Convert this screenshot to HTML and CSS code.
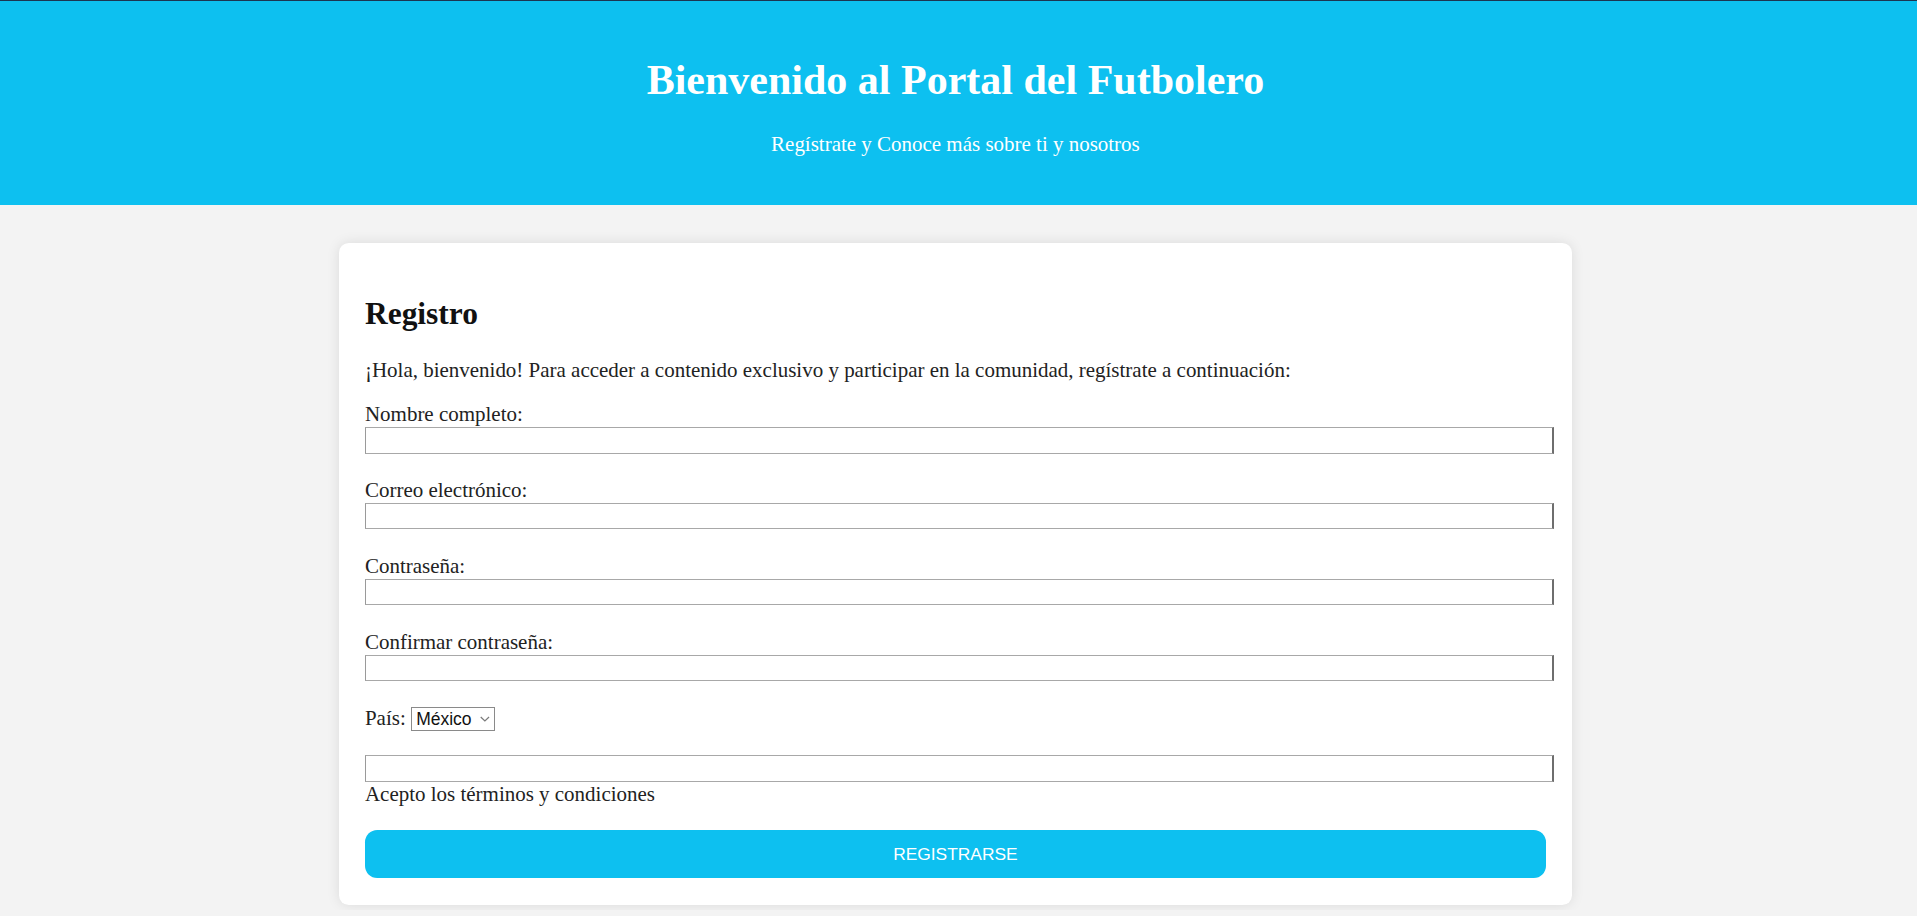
FILE: index.html
```html
<!DOCTYPE html>
<html lang="es">
<head>
<meta charset="utf-8">
<title>Portal del Futbolero</title>
<link rel="stylesheet" href="styles.css">
</head>
<body>
<header class="site-header">
  <h1 class="site-title">Bienvenido al Portal del Futbolero</h1>
  <p class="site-subtitle">Regístrate y Conoce más sobre ti y nosotros</p>
</header>
<main class="page">
  <section class="card">
    <h2 class="card-title">Registro</h2>
    <p class="intro">¡Hola, bienvenido! Para acceder a contenido exclusivo y participar en la comunidad, regístrate a continuación:</p>
    <form class="form">
      <div class="field">
        <label class="field-label" for="nombre">Nombre completo:</label>
        <input class="field-input" id="nombre" type="text">
      </div>
      <div class="field">
        <label class="field-label" for="correo">Correo electrónico:</label>
        <input class="field-input" id="correo" type="email">
      </div>
      <div class="field">
        <label class="field-label" for="pass">Contraseña:</label>
        <input class="field-input" id="pass" type="password">
      </div>
      <div class="field">
        <label class="field-label" for="pass2">Confirmar contraseña:</label>
        <input class="field-input" id="pass2" type="password">
      </div>
      <div class="field-country">
        <label for="pais">País:</label>
        <span class="select-wrap">
          <select id="pais" class="country-select"><option>México</option><option>Argentina</option><option>España</option></select>
          <svg class="select-arrow" width="8" height="5" viewBox="0 0 8 5" aria-hidden="true"><path d="M0.6 0.8 L4 4 L7.4 0.8" fill="none" stroke="#7a7a7a" stroke-width="1"/></svg>
        </span>
      </div>
      <div class="terms">
        <input class="field-input terms-box" id="terms" type="checkbox">
        <label class="terms-label" for="terms">Acepto los términos y condiciones</label>
      </div>
      <button class="submit" type="submit">REGISTRARSE</button>
    </form>
  </section>
</main>
</body>
</html>
```
FILE: styles.css
```css
html {
  zoom: 1.2245;
  background: linear-gradient(to left, #ffffff 2.5px, #f3f3f3 2.5px);
}

body {
  margin: 0 2.5px 0 0;
  font-family: "Liberation Serif", "Times New Roman", serif;
  font-size: 17.14px;
  color: #222;
}

.site-header {
  background: #0dc0f0;
  border-top: 1px solid #1c3552;
  color: #fff;
  text-align: center;
  padding: 22px 5px 21.8px 0;
}

.site-title {
  margin: 23px 0 0;
  font-size: 34.3px;
  font-weight: bold;
  line-height: normal;
}

.site-subtitle {
  margin: 23px 0 17.14px;
  font-size: 17.14px;
  line-height: normal;
}

.page {
  padding: 31.5px 5px 4px 0;
}

.card {
  box-sizing: border-box;
  width: 1006.4px;
  margin: 0 auto;
  padding: 21px 21px 22px;
  background: #fff;
  border-radius: 8px;
  box-shadow: 0 0 10px rgba(0, 0, 0, 0.1);
}

.card-title {
  margin: 21.8px 0 21.4px;
  font-size: 25.7px;
  font-weight: bold;
  line-height: normal;
  color: #111;
}

.intro {
  margin: 0 0 15.6px;
  line-height: normal;
}

.form {
  margin: 0;
}

.field {
  margin-bottom: 19.9px;
}

.field-label {
  display: block;
  line-height: normal;
}

.field-input {
  display: block;
  box-sizing: content-box;
  width: 100%;
  height: 18px;
  margin: 0;
  padding: 1px 2px;
  border: 1px solid #a8a8a8;
  border-left-color: #9a9a9a;
  border-right: 2px solid #6e6e6e;
  border-radius: 0;
  background: #fff;
  font: 13.33px "Liberation Sans", Arial, sans-serif;
  outline: none;
}

.terms-box {
  -webkit-appearance: none;
  appearance: none;
}

.field-country {
  display: flex;
  align-items: center;
  gap: 4.7px;
  height: 20.8px;
  margin-bottom: 19.8px;
  line-height: normal;
}

.select-wrap {
  position: relative;
  display: block;
  height: 20px;
}

.country-select {
  -webkit-appearance: none;
  appearance: none;
  box-sizing: border-box;
  width: 68px;
  height: 20px;
  margin: 0;
  padding: 0 0 0 3px;
  border: 1px solid #8a8a8a;
  border-radius: 0;
  background: #fff;
  color: #111;
  font: 14.3px "Liberation Sans", Arial, sans-serif;
}

.select-arrow {
  position: absolute;
  right: 4px;
  top: 8px;
  pointer-events: none;
}

.terms-label {
  display: block;
  line-height: normal;
}

.submit {
  display: block;
  width: 100%;
  height: 39px;
  margin-top: 19.2px;
  border: 0;
  border-radius: 10px;
  background: #0dc0f0;
  color: #fff;
  font: 14.2px "Liberation Sans", Arial, sans-serif;
  cursor: pointer;
}
```
